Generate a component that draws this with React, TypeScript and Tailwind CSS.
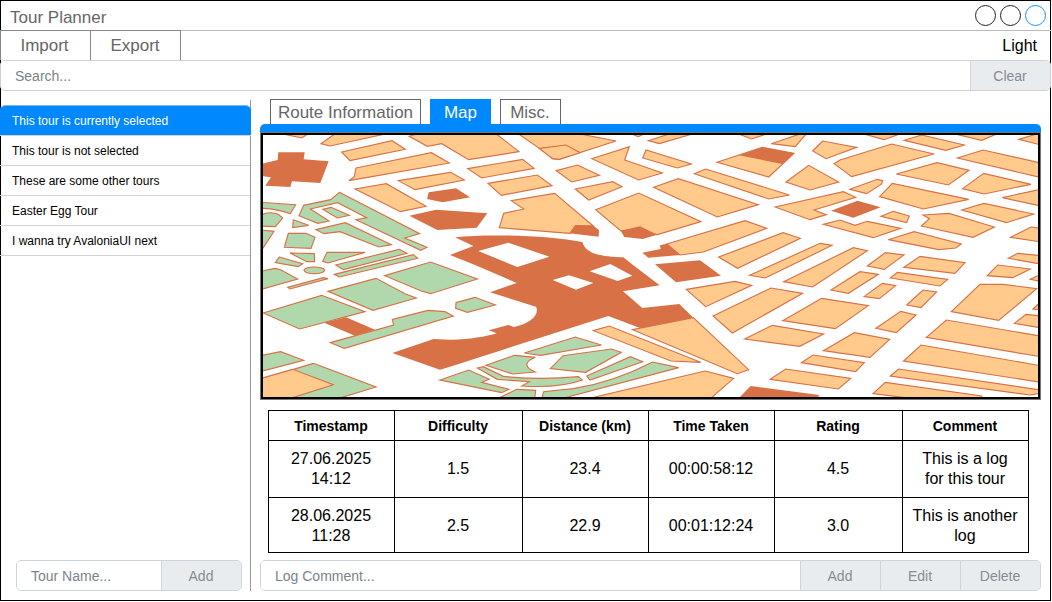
import { ReactNode } from "react";

type Kind = "o" | "g" | "b";
type Shape = [Kind, string];

const fills: Record<Kind, string> = { o: "#ffca8c", g: "#b1d8ad", b: "#d87145" };

// Map sheets, each with its own origin in map units (3 units per pixel).
const sheets: { x: number; y: number; shapes: Shape[] }[] = [
  {
    x: 0,
    y: 0,
    shapes: [
      ["o", "M60,10 125,24 150,8Z"],
      ["o", "M183,41 225,11 380,11 210,48Z"],
      ["o", "M245,66 396,32 436,58 270,92Z"],
      ["o", "M288,114 514,68 568,99 267,152 283,140Z"],
      ["o", "M285,177 379,161 498,229 421,245Z"],
      ["o", "M415,152 572,127 613,150 465,179Z"],
      ["o", "M448,19 490,5 700,5 777,65 626,89 545,41 502,49Z"],
      ["b", "M55,67 134,67 131,88 206,94 181,159 96,154 91,171 16,167 33,142 0,138 0,103 53,90Z"],
      ["b", "M506,187 588,175 630,202 548,217 501,207Z"],
      ["b", "M448,257 528,239 682,250 650,293 532,300Z"],
      ["g", "M0,217 107,224 91,251Q50,236 0,235Z"],
      ["g", "M0,256Q30,242 55,253L68,264 46,290 0,288Z"],
      ["g", "M0,300 42,304 0,368Z"],
      ["g", "M100,269 146,286 98,293Z"],
      ["g", "M85,310 138,310 165,322 153,355 73,352Z"],
      ["g", "M90,369 163,371 164,395 140,395Z"],
      ["g", "M201,367 315,367 204,399 188,394Z"],
      ["g", "M58,381 128,401 115,410 46,398Z"],
      ["g", "M238,187 479,311 434,324 501,352 482,361 288,269 320,263 233,218 151,237 207,273 173,280 117,257 131,226 212,209Z"],
      ["g", "M188,238 213,232 268,256 232,264Z"],
      ["g", "M168,299 256,278 394,344 356,351 240,305 192,311Z"],
      ["g", "M227,405 418,358 441,370 250,419Z"],
      ["g", "M223,433 460,374 473,385 238,441Z"],
      ["g", "M374,437 512,396 652,447 512,491 484,483Z"],
      ["g", "M132,421A31,10 0 0 1 194,421A31,10 0 0 1 132,421Z"],
      ["g", "M83,472 190,443 204,446 90,477Z"],
    ],
  },
  {
    x: 0,
    y: 405,
    shapes: [
      ["g", "M0,19 45,10 62,14 113,42 0,74Z"],
      ["g", "M204,79 348,40 438,88 469,99 339,136Z"],
      ["b", "M192,173 258,157 345,194 285,212Z"],
      ["g", "M9,144 185,91 315,140 119,192Z"],
      ["g", "M211,233 401,180 397,163 504,136 555,140 580,153 253,250Z"],
      ["g", "M0,272 62,260 131,286 0,320Z"],
      ["g", "M160,295 348,366 230,402 0,402 0,342 100,313Z"],
      ["o", "M0,341 98,313 220,359 85,402 0,402Z"],
    ],
  },
  {
    x: 570,
    y: 0,
    shapes: [
      ["o", "M53,116 218,88 252,115 95,144Z"],
      ["o", "M114,160 262,135 306,167 154,196Z"],
      ["o", "M200,8 370,8 498,33 327,88 308,86 268,55Z"],
      ["o", "M268,55 348,45 390,68 327,88 308,86Z"],
      ["o", "M319,122 383,105 448,136 365,156Z"],
      ["o", "M376,177 488,155 516,170 416,210Z"],
      ["o", "M425,86 538,50 524,90 637,129 566,150Z"],
      ["o", "M540,10 565,20 590,8Z"],
      ["o", "M148,293 161,250 221,237 184,212 314,190 430,288 358,310Z"],
      ["b", "M375,285 428,286 447,300 446,320 358,310Z"],
      ["o", "M437,239 566,189 753,275 622,314 512,302Z"],
      ["b", "M512,302 570,289 622,314 578,327 523,321Z"],
      ["b", "M15,322C120,310 300,318 397,336C405,370 450,380 520,382L549,405 629,466 519,484 577,534 688,522 730,563 570,594 475,558 0,710 -30,719 -173,669 -49,627 0,629C50,630 110,620 140,610L116,601 175,585 192,591C240,580 270,555 258,530L120,487 200,459 75,405 0,375 70,348ZM85,363 175,338 298,380 202,411ZM308,450 357,436 430,459 378,479ZM419,424 481,402 547,437 503,453Z"],
    ],
  },
  {
    x: 570,
    y: 405,
    shapes: [
      ["o", "M548,194 730,158 896,314 862,326Z"],
      ["o", "M430,197 478,183 752,292 663,288Z"],
      ["g", "M223,264 376,216 454,240 272,271Z"],
      ["g", "M301,311 339,272 484,252 514,262 407,322Z"],
      ["g", "M108,301 194,271 256,277Q205,298 256,321L189,327Z"],
      ["g", "M410,333 541,275 578,290 420,345Z"],
      ["g", "M82,309 100,305 160,334Q270,346 385,335L397,345Q330,370 215,363L238,350 142,343Z"],
      ["g", "M-30,345 56,315 118,343 95,352 177,373 155,383 -10,349Z"],
      ["g", "M140,402 200,373 257,376 254,402Z"],
      ["g", "M275,402 281,380 370,371Q490,352 608,291L686,308 330,402Z"],
      ["o", "M410,402 765,318 851,340 780,402Z"],
      ["g", "M18,113 75,97 136,120 52,142 17,130Z"],
    ],
  },
  {
    x: 1140,
    y: 0,
    shapes: [
      ["o", "M8,84 18,60 154,102 112,114Z"],
      ["o", "M25,32 100,8 170,8 58,41Z"],
      ["o", "M80,342 315,272 380,295 190,366 120,375Z"],
      ["b", "M7,368 62,357 60,346 80,341 120,375 25,383Z"],
      ["o", "M231,97 367,52 462,70 386,141Z"],
      ["b", "M297,76 367,52 462,70 427,102Z"],
      ["o", "M163,131 197,117 448,195 386,207Z"],
      ["o", "M41,172 115,146 355,224 232,261Z"],
      ["o", "M394,41 485,10 500,10 466,50Z"],
      ["o", "M285,8 335,27 385,10Z"],
      ["o", "M518,63 548,33 650,52 558,86Z"],
      ["o", "M438,156 506,106 596,156 510,180Z"],
      ["o", "M405,231 610,185 647,202 522,240 559,254 510,269Z"],
      ["o", "M236,381 429,308 481,325 293,415Z"],
      ["o", "M329,436 540,340 576,346 376,444Z"],
      ["b", "M45,403 180,391 243,437 108,457Z"],
    ],
  },
  {
    x: 1140,
    y: 405,
    shapes: [
      ["o", "M428,167 545,100 685,122 586,191Z"],
      ["o", "M391,343 437,312 632,340 595,372Z"],
      ["o", "M314,222 397,181 551,207 479,244Z"],
      ["o", "M219,153 393,69 488,85 277,204Z"],
      ["o", "M139,73 285,49 335,61 197,125Z"],
      ["b", "M294,402 332,363 538,390 530,402Z"],
    ],
  },
  {
    x: 1770,
    y: 0,
    shapes: [
      ["o", "M-48,101 -30,90 125,42 252,72 5,140Z"],
      ["o", "M0,178 82,148 98,152 95,162 50,191Z"],
      ["b", "M-57,242 22,212 92,232 10,263Z"],
      ["o", "M-80,283 -30,270 15,286 52,274 152,295 70,323Z"],
      ["o", "M-199,455 10,353 52,362 -112,471Z"],
      ["o", "M115,329 192,305 334,342 317,354 266,359Z"],
      ["o", "M93,259 130,244 178,258 170,278Z"],
      ["o", "M219,255 297,250 433,291 369,322 214,288 238,266Z"],
      ["o", "M335,240 402,220 551,252 470,278Z"],
      ["o", "M457,203 600,172 600,234Z"],
      ["o", "M338,176 401,130 543,163 402,192Z"],
      ["o", "M322,84 399,60 600,105 600,149Z"],
      ["o", "M507,28 560,12 600,10 600,52Z"],
      ["o", "M163,31 215,15 343,45 287,61Z"],
      ["o", "M35,10 102,29 155,10Z"],
      ["o", "M315,12 395,31 445,10Z"],
      ["o", "M139,132 261,98 357,121 295,165Z"],
      ["o", "M89,200 127,160 356,208 220,237Z"],
      ["o", "M482,322 543,291 600,298 600,340Z"],
      ["o", "M475,385 503,370 600,380 600,407Z"],
      ["o", "M52,408 106,368 162,375 103,418Z"],
      ["o", "M162,412 210,379 345,398 315,430Z"],
    ],
  },
  {
    x: 1770,
    y: 405,
    shapes: [
      ["o", "M412,32 443,0 541,12 488,38Z"],
      ["o", "M-57,75 30,20 85,28 -5,85Z"],
      ["o", "M541,43 600,15 600,55Z"],
      ["o", "M121,39 142,22 293,43 270,63Z"],
      ["o", "M42,95 97,55 137,62 88,101Z"],
      ["o", "M170,120 219,75 260,81 213,128Z"],
      ["o", "M304,140 390,58 460,58 560,71 446,166Z"],
      ["o", "M549,132 600,85 600,140Z"],
      ["o", "M493,175 528,148 600,156 600,193Z"],
      ["o", "M78,190 152,139 198,150 139,203Z"],
      ["o", "M229,217 289,165 600,218 600,280Z"],
      ["o", "M161,288 213,240 600,307 600,356Z"],
      ["o", "M121,333 146,312 600,379 600,380 540,390Z"],
      ["o", "M69,386 106,352 395,393 395,402 200,402Z"],
      ["o", "M-80,257 13,203 119,223 60,277Z"],
      ["o", "M-146,293 -111,270 43,293 17,320Z"],
    ],
  },
];

function CityMap() {
  return (
    <div className="border border-[#777] bg-white">
      <div className="border-2 border-black">
        <svg className="block h-[262px] w-[775px]" viewBox="9 15 2325 786" preserveAspectRatio="none">
          {sheets.map((s) => (
            <g key={`${s.x}-${s.y}`} transform={`translate(${s.x} ${s.y})`}>
              {s.shapes.map(([kind, d]) => (
                <path
                  key={d}
                  d={d}
                  fill={fills[kind]}
                  fillRule="evenodd"
                  stroke="#d87145"
                  strokeWidth={kind === "b" ? 0 : 3.4}
                />
              ))}
            </g>
          ))}
        </svg>
      </div>
    </div>
  );
}

function Field({ placeholder }: { placeholder: string }) {
  return (
    <input
      placeholder={placeholder}
      className="min-w-0 flex-1 bg-white px-[14px] pt-[2px] text-[14px] outline-none placeholder:text-[#7b838a]"
    />
  );
}

function FieldButton({ children }: { children: ReactNode }) {
  return (
    <button className="w-20 shrink-0 border-l border-[#ced4da] bg-[#e9ecef] pt-[2px] pr-px text-[14px] text-[#868c92]">
      {children}
    </button>
  );
}

const tours = [
  "This tour is currently selected",
  "This tour is not selected",
  "These are some other tours",
  "Easter Egg Tour",
  "I wanna try AvaloniaUI next",
];

const columns = ["Timestamp", "Difficulty", "Distance (km)", "Time Taken", "Rating", "Comment"];

const logs: string[][] = [
  ["27.06.2025\n14:12", "1.5", "23.4", "00:00:58:12", "4.5", "This is a log\nfor this tour"],
  ["28.06.2025\n11:28", "2.5", "22.9", "00:01:12:24", "3.0", "This is another\nlog"],
];

const grid = "grid grid-cols-[126px_128px_126px_126px_128px_126px]";

export default function App() {
  return (
    <div className="flex h-[601px] w-[1051px] flex-col border border-black bg-white font-['Liberation_Sans',Arial,sans-serif] text-black">
      <header className="-mr-px flex h-[30px] shrink-0 items-center justify-between border-b border-[#bbb] pr-[5px] pl-[9px]">
        <h1 className="pt-[5px] text-[17px] leading-5 text-[#666]">Tour Planner</h1>
        <div className="flex gap-1">
          <span className="size-[21px] rounded-full border border-[#222]" />
          <span className="size-[21px] rounded-full border border-[#222]" />
          <span className="size-[21px] rounded-full border border-[#1a90ff]" />
        </div>
      </header>

      <nav className="-ml-px -mt-px flex h-[30px] shrink-0 text-[17px] text-[#666]">
        <button className="w-[90px] border-t border-l border-[#888] pr-[2px]">Import</button>
        <button className="w-[91px] border-x border-t border-[#888] pr-px">Export</button>
        <span className="ml-auto pt-[6px] pr-[13px] text-[16px] leading-5 text-black">Light</span>
      </nav>

      <div className="-mx-px flex h-[31px] shrink-0 overflow-hidden rounded-[5px] border border-[#ced0da] bg-white">
        <Field placeholder="Search..." />
        <FieldButton>Clear</FieldButton>
      </div>

      <main className="flex min-h-0 flex-1 pt-[8px] pb-[9px]">
        <aside className="-ml-px mt-px flex w-[251px] shrink-0 flex-col border-r border-[#999] pt-[5px]">
          <ul className="text-[12px]">
            {tours.map((tour, i) => (
              <li
                key={tour}
                className={
                  i === 0
                    ? "-mr-px flex h-[31px] items-center rounded-t-[5px] border-t border-b border-t-[#7fb4e8] border-b-[#d3d3d3] bg-[#0088ff] bg-clip-padding pl-3 text-white"
                    : "flex h-[30px] items-center border-b border-[#d3d3d3] pl-3"
                }
              >
                {tour}
              </li>
            ))}
          </ul>
          <div className="mt-auto ml-4 flex h-[31px] w-[226px] overflow-hidden rounded-[5px] border border-[#ced4da]">
            <Field placeholder="Tour Name..." />
            <FieldButton>Add</FieldButton>
          </div>
        </aside>

        <section className="ml-[9px] flex w-[781px] flex-col">
          <div className="flex h-[25px] shrink-0 gap-[9px] pl-[10px] text-[17px] text-[#666]">
            <button className="w-[151px] border border-b-0 border-[#666]">Route Information</button>
            <button className="w-[61px] bg-[#0088ff] pt-px text-white">Map</button>
            <button className="w-[61px] border border-b-0 border-[#666] pr-px">Misc.</button>
          </div>
          <div className="h-2 shrink-0 rounded-t-[5px] bg-[#0088ff]" />
          <CityMap />

          <div className="mt-[10px] ml-2 w-[761px] border-t border-l border-black text-center">
            <div className={`${grid} h-[30px] text-[14px] font-bold`}>
              {columns.map((c) => (
                <div key={c} className="flex items-center justify-center border-r border-b border-black pt-[2px] pr-px">
                  {c}
                </div>
              ))}
            </div>
            {logs.map((row, r) => (
              <div key={row[0]} className={`${grid} text-[16px] leading-5 ${r === 0 ? "h-[57px]" : "h-[55px]"}`}>
                {row.map((cell) => (
                  <div
                    key={cell}
                    className={`flex items-center justify-center border-r border-b border-black pr-px whitespace-pre-line ${r === 0 ? "" : "pt-[2px]"}`}
                  >
                    {cell}
                  </div>
                ))}
              </div>
            ))}
          </div>

          <div className="mt-auto flex h-[31px] shrink-0 overflow-hidden rounded-[5px] border border-[#ced4da]">
            <Field placeholder="Log Comment..." />
            <FieldButton>Add</FieldButton>
            <FieldButton>Edit</FieldButton>
            <FieldButton>Delete</FieldButton>
          </div>
        </section>
      </main>
    </div>
  );
}
